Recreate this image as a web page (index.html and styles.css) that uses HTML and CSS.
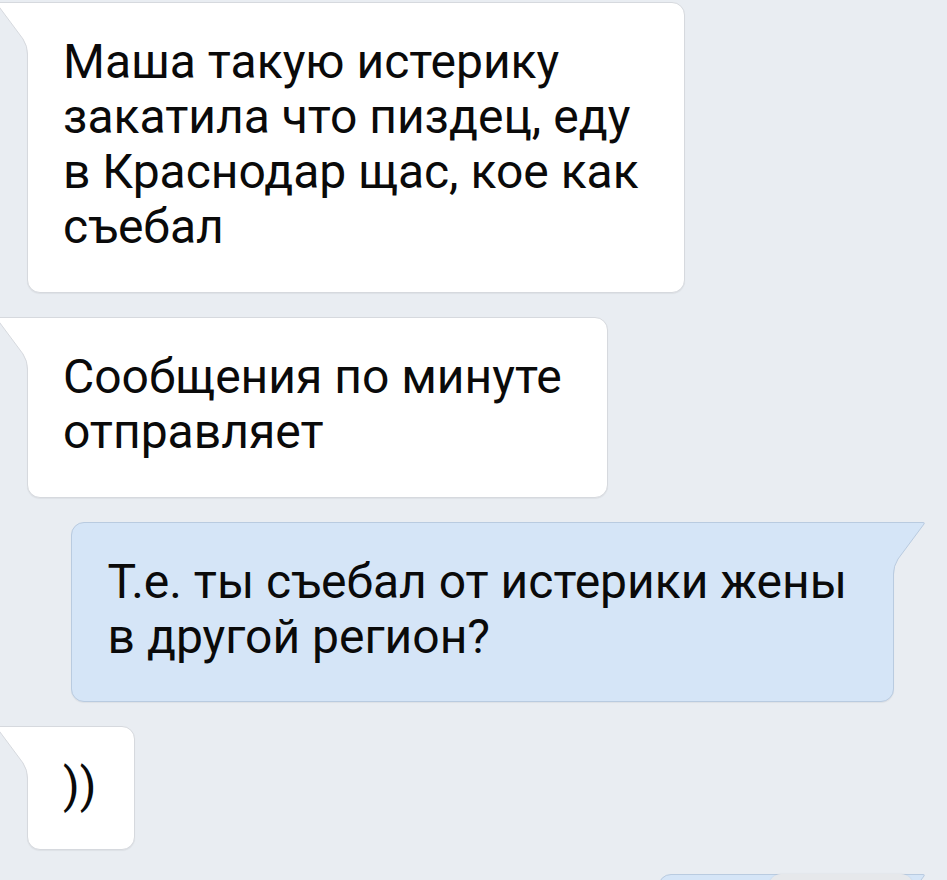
FILE: index.html
```html
<!DOCTYPE html>
<html>
<head>
    <title>Диалог</title>
    <link rel="stylesheet" href="styles.css">
</head>
<body>
    <div class="chat">
        <div class="msg in">
            <svg class="tail" viewBox="0 0 34 60"><path class="tail-fill" d="M34,0.5 L2,0.5 Q0,0.5 1,2 L27,37 Q31.5,44 31.5,52 L31.5,60 L34,60 Z"/><path class="tail-line" d="M34,0.5 L2,0.5 Q0,0.5 1,2 L27,37 Q31.5,44 31.5,52 L31.5,60"/></svg>
            <div class="text">Маша такую истерику<br>закатила что пиздец, еду<br>в Краснодар щас, кое как<br>съебал</div>
        </div>
        <div class="msg in">
            <svg class="tail" viewBox="0 0 34 60"><path class="tail-fill" d="M34,0.5 L2,0.5 Q0,0.5 1,2 L27,37 Q31.5,44 31.5,52 L31.5,60 L34,60 Z"/><path class="tail-line" d="M34,0.5 L2,0.5 Q0,0.5 1,2 L27,37 Q31.5,44 31.5,52 L31.5,60"/></svg>
            <div class="text">Сообщения по минуте<br>отправляет</div>
        </div>
        <div class="msg out">
            <svg class="tail" viewBox="0 0 34 60"><path class="tail-fill" d="M34,0.5 L2,0.5 Q0,0.5 1,2 L27,37 Q31.5,44 31.5,52 L31.5,60 L34,60 Z"/><path class="tail-line" d="M34,0.5 L2,0.5 Q0,0.5 1,2 L27,37 Q31.5,44 31.5,52 L31.5,60"/></svg>
            <div class="text">Т.е. ты съебал от истерики жены<br>в другой регион?</div>
        </div>
        <div class="msg in short">
            <svg class="tail" viewBox="0 0 34 60"><path class="tail-fill" d="M34,0.5 L2,0.5 Q0,0.5 1,2 L27,37 Q31.5,44 31.5,52 L31.5,60 L34,60 Z"/><path class="tail-line" d="M34,0.5 L2,0.5 Q0,0.5 1,2 L27,37 Q31.5,44 31.5,52 L31.5,60"/></svg>
            <div class="text">))</div>
        </div>
        <div class="msg out next">
            <svg class="tail" viewBox="0 0 34 60"><path class="tail-fill" d="M34,0.5 L2,0.5 Q0,0.5 1,2 L27,37 Q31.5,44 31.5,52 L31.5,60 L34,60 Z"/><path class="tail-line" d="M34,0.5 L2,0.5 Q0,0.5 1,2 L27,37 Q31.5,44 31.5,52 L31.5,60"/></svg>
            <div class="chip"></div>
        </div>
    </div>
</body>
</html>
```

FILE: styles.css
```css
body {
    margin: 0;
    background-color: #e9edf2;
    font-family: Roboto, "Liberation Sans", sans-serif;
    color: #0a0a0a;
    overflow: hidden;
}
.chat {
    display: flex;
    flex-direction: column;
    gap: 24px;
    padding-top: 2px;
}
.msg {
    position: relative;
    border: 1px solid #d6d9de;
    border-radius: 13px;
    box-shadow: 0 1px 1px rgba(0,0,0,0.05);
}
.text {
    font-size: 48px;
    line-height: 55px;
    white-space: nowrap;
}
.msg.in {
    align-self: flex-start;
    margin-left: 27px;
    background-color: #ffffff;
    border-top-left-radius: 0;
    padding: 31px 45px 38px 35px;
}
.msg.out {
    align-self: flex-end;
    margin-right: 53px;
    background-color: #d5e5f7;
    border-color: #b9cbe0;
    border-top-right-radius: 0;
    padding: 31px 46px 37px 36px;
}
.msg.short {
    padding-right: 38px;
    padding-bottom: 36px;
}
.tail {
    position: absolute;
    top: -1px;
    left: -32px;
    width: 34px;
    height: 60px;
}
.msg.out .tail {
    left: auto;
    right: -32px;
    transform: scaleX(-1);
}
.tail-fill {
    fill: #ffffff;
}
.tail-line {
    fill: none;
    stroke: #d6d9de;
    stroke-width: 1;
}
.msg.out .tail-fill {
    fill: #d5e5f7;
}
.msg.out .tail-line {
    stroke: #b9cbe0;
}
.msg.next {
    width: 236px;
    height: 60px;
    padding: 0;
    box-sizing: border-box;
}
.chip {
    position: absolute;
    top: -1px;
    left: 110px;
    width: 144px;
    height: 40px;
    border-radius: 12px;
    background-color: #e6e8eb;
    box-shadow: 0 0 2px rgba(0,0,0,0.08);
}
```
